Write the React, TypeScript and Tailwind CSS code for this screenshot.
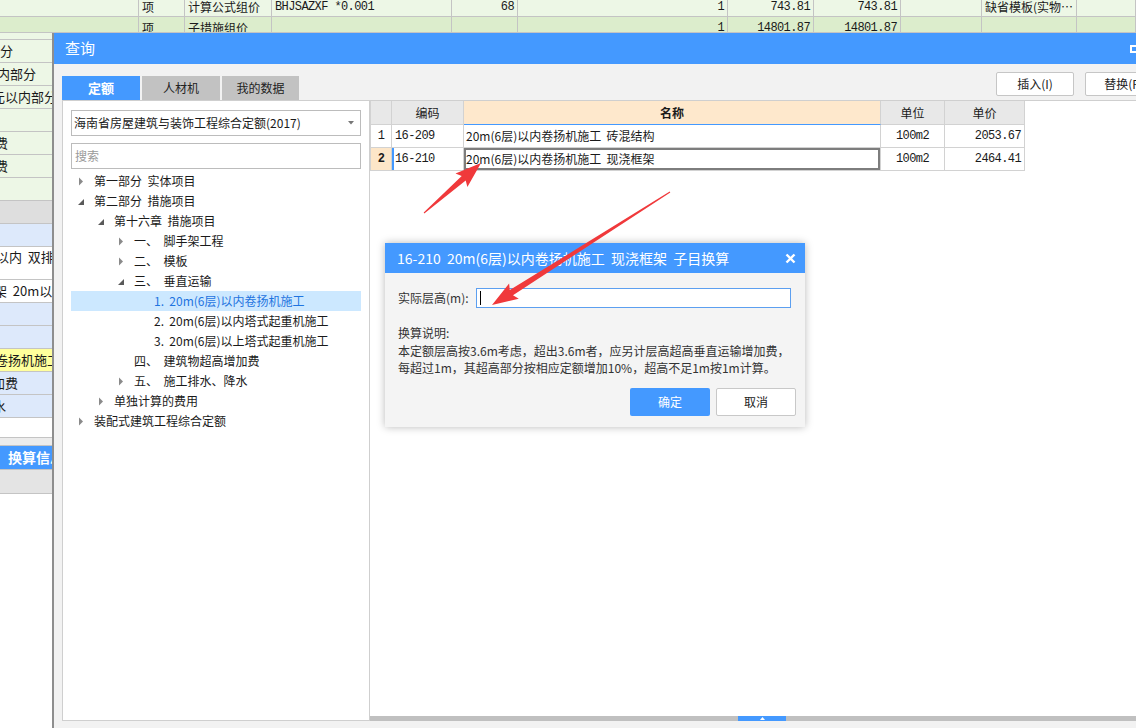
import React from "react";

const CJK = "font-['Noto_Sans_CJK_SC',sans-serif]";
const MONO = "font-['Liberation_Mono','Noto_Sans_CJK_SC',monospace] tracking-[-0.6px]";

type TopCell = { w: string; t?: string; right?: boolean; mono?: boolean };

const TOP_COLS: TopCell[] = [
  { w: "w-[139px]" },
  { w: "w-[46px]", t: "项" },
  { w: "w-[87px]", t: "计算公式组价" },
  { w: "w-[180px]", t: "BHJSAZXF *0.001", mono: true },
  { w: "w-[66px]", t: "68", right: true, mono: true },
  { w: "w-[210px]", t: "1", right: true, mono: true },
  { w: "w-[86px]", t: "743.81", right: true, mono: true },
  { w: "w-[87px]", t: "743.81", right: true, mono: true },
  { w: "w-[81px]" },
  { w: "w-[95px]", t: "缺省模板(实物…" },
  { w: "w-[59px]" },
];

const SECOND_ROW = ["", "项", "子措施组价", "", "", "1", "14801.87", "14801.87", "", "", ""];

type SideRow = { h: string; bg: string; t?: string; ml?: string; top?: boolean; bold?: boolean };

const SIDE_ROWS: SideRow[] = [
  { h: "h-[7px]", bg: "bg-[#edf7e6]" },
  { h: "h-[23px]", bg: "bg-[#edf7e6]", t: "部分", ml: "ml-[-13px]" },
  { h: "h-[23px]", bg: "bg-[#edf7e6]", t: "以内部分", ml: "ml-[-16px]" },
  { h: "h-[23px]", bg: "bg-[#edf7e6]", t: "元以内部分", ml: "ml-[-8px]" },
  { h: "h-[23px]", bg: "bg-[#edf7e6]" },
  { h: "h-[23px]", bg: "bg-[#edf7e6]", t: "费", ml: "ml-[-5px]" },
  { h: "h-[23px]", bg: "bg-[#edf7e6]", t: "费", ml: "ml-[-5px]" },
  { h: "h-[23px]", bg: "bg-[#edf7e6]" },
  { h: "h-[23px]", bg: "bg-[#dedede]" },
  { h: "h-[23px]", bg: "bg-[#dde9fb]" },
  { h: "h-[33px]", bg: "bg-white", t: "以内  双排", ml: "ml-[-4px]", top: true },
  { h: "h-[23px]", bg: "bg-white", t: "架  20m以内", ml: "ml-[-6px]" },
  { h: "h-[23px]", bg: "bg-[#dde9fb]" },
  { h: "h-[23px]", bg: "bg-[#dde9fb]" },
  { h: "h-[23px]", bg: "bg-[#ffff9c]", t: "卷扬机施工", ml: "ml-[-5px]" },
  { h: "h-[23px]", bg: "bg-[#dde9fb]", t: "加费", ml: "ml-[-8px]" },
  { h: "h-[23px]", bg: "bg-[#dde9fb]", t: "水", ml: "ml-[-7px]" },
  { h: "h-[20px]", bg: "bg-white" },
  { h: "h-[8px]", bg: "bg-[#ececec]" },
  { h: "h-[24px]", bg: "bg-[#4499ff]", t: "换算信息", ml: "ml-[8px]", bold: true },
  { h: "h-[24px]", bg: "bg-[#e4e4e4]" },
];

type TreeItem = { lv: number; t: string; a?: "c" | "e"; sel?: boolean };

const TREE: TreeItem[] = [
  { lv: 0, t: "第一部分  实体项目", a: "c" },
  { lv: 0, t: "第二部分  措施项目", a: "e" },
  { lv: 1, t: "第十六章  措施项目", a: "e" },
  { lv: 2, t: "一、  脚手架工程", a: "c" },
  { lv: 2, t: "二、  模板", a: "c" },
  { lv: 2, t: "三、  垂直运输", a: "e" },
  { lv: 3, t: "1.  20m(6层)以内卷扬机施工", sel: true },
  { lv: 3, t: "2.  20m(6层)以内塔式起重机施工" },
  { lv: 3, t: "3.  20m(6层)以上塔式起重机施工" },
  { lv: 2, t: "四、  建筑物超高增加费" },
  { lv: 2, t: "五、  施工排水、降水", a: "c" },
  { lv: 1, t: "单独计算的费用", a: "c" },
  { lv: 0, t: "装配式建筑工程综合定额", a: "c" },
];

const INDENT = ["pl-[7px]", "pl-[27px]", "pl-[47px]", "pl-[67px]"];

const ROWS = [
  { n: "1", code: "16-209", name: "20m(6层)以内卷扬机施工  砖混结构", unit: "100m2", price: "2053.67" },
  { n: "2", code: "16-210", name: "20m(6层)以内卷扬机施工  现浇框架", unit: "100m2", price: "2464.41" },
];

function arrowPoints(x1: number, y1: number, x2: number, y2: number) {
  const headLen = 23;
  const headW = 18;
  const shaftW = 6;
  const tailW = 1;
  const dx = x2 - x1;
  const dy = y2 - y1;
  const len = Math.hypot(dx, dy);
  const ux = dx / len;
  const uy = dy / len;
  const px = -uy;
  const py = ux;
  const bx = x2 - ux * headLen;
  const by = y2 - uy * headLen;
  const wx = bx - ux * 3;
  const wy = by - uy * 3;
  const pts = [
    [x1 + (px * tailW) / 2, y1 + (py * tailW) / 2],
    [bx + (px * shaftW) / 2, by + (py * shaftW) / 2],
    [wx + (px * headW) / 2, wy + (py * headW) / 2],
    [x2, y2],
    [wx - (px * headW) / 2, wy - (py * headW) / 2],
    [bx - (px * shaftW) / 2, by - (py * shaftW) / 2],
    [x1 - (px * tailW) / 2, y1 - (py * tailW) / 2],
  ];
  return pts.map((p) => `${p[0].toFixed(1)},${p[1].toFixed(1)}`).join(" ");
}

function TreeArrow({ kind }: { kind?: "c" | "e" }) {
  if (kind === "c") {
    return (
      <svg width="6" height="9" viewBox="0 0 6 9" className="mr-[10px] shrink-0">
        <polygon points="1,0.5 5,4.5 1,8.5" fill="#8a8a8a" />
      </svg>
    );
  }
  if (kind === "e") {
    return (
      <svg width="6" height="9" viewBox="0 0 6 9" className="mr-[10px] shrink-0">
        <polygon points="6,2 6,8 0,8" fill="#5a5a5a" />
      </svg>
    );
  }
  return <span className="mr-[10px] w-[6px] shrink-0" />;
}

export default function App() {
  return (
    <div className={`relative h-[728px] w-[1136px] overflow-hidden bg-white text-[#1a1a1a] ${CJK}`}>
      {/* page behind the dialog */}
      <div className="flex flex-col">
        <div className="flex h-[17px] bg-[#edf7e6] text-[12px] leading-[12px]">
          {TOP_COLS.map((c, i) => (
            <div
              key={i}
              className={`${c.w} shrink-0 overflow-hidden whitespace-nowrap border-r border-b border-[#c4c4c4] pt-[1px] ${
                c.right ? "pr-[3px] text-right" : "pl-[3px]"
              } ${c.mono ? MONO : ""}`}
            >
              {c.t}
            </div>
          ))}
        </div>
        <div className="flex h-[16px] bg-[#dcedcc] text-[12px] leading-[12px]">
          {TOP_COLS.map((c, i) => (
            <div
              key={i}
              className={`${c.w} shrink-0 overflow-hidden whitespace-nowrap border-r border-b border-[#c4c4c4] pt-[5px] ${
                c.right ? "pr-[3px] text-right" : "pl-[3px]"
              } ${c.mono ? MONO : ""}`}
            >
              {SECOND_ROW[i]}
            </div>
          ))}
        </div>
        {SIDE_ROWS.map((r, i) => (
          <div
            key={i}
            className={`${r.h} ${r.bg} flex w-[52px] overflow-hidden border-b border-[#c4c4c4] ${
              r.top ? "items-start" : "items-center"
            }`}
          >
            {r.t && (
              <span
                className={`${r.ml} shrink-0 whitespace-pre ${
                  r.bold ? "text-[14px] font-bold text-white" : "text-[13px]"
                }`}
              >
                {r.t}
              </span>
            )}
          </div>
        ))}
      </div>

      {/* query dialog */}
      <div className="absolute left-[52px] top-[33px] flex h-[700px] w-[1120px] flex-col border-l-2 border-[#8e8e8e] bg-[#f2f2f2]">
        <div className="flex h-[31px] shrink-0 items-center justify-between bg-[#4499ff] pl-[11px] pr-[10px]">
          <span className="text-[15px] text-white">查询</span>
          <div className="flex items-center gap-[12px]">
            <svg width="10" height="8" viewBox="0 0 10 8">
              <rect x="1" y="1" width="8" height="6" fill="none" stroke="#fff" strokeWidth="2" />
            </svg>
            <svg width="10" height="10" viewBox="0 0 10 10">
              <path d="M1 1 L9 9 M9 1 L1 9" stroke="#fff" strokeWidth="2" />
            </svg>
          </div>
        </div>

        <div className="flex flex-1 flex-col pl-[8px] pr-[9px]">
          <div className="mt-[8px] flex h-[28px] shrink-0 justify-between">
            <div className="flex gap-[2px] self-end">
              <div className="flex h-[24px] w-[78px] items-center justify-center bg-[#4499ff] text-[13px] font-bold text-white">
                定额
              </div>
              <div className="flex h-[24px] w-[78px] items-center justify-center bg-[#c2c2c2] text-[12px] text-[#222]">
                人材机
              </div>
              <div className="flex h-[24px] w-[77px] items-center justify-center bg-[#c2c2c2] text-[12px] text-[#222]">
                我的数据
              </div>
            </div>
            <div className="flex gap-[11px] self-start">
              <button className="flex h-[24px] w-[78px] items-center justify-center rounded-[2px] border border-[#c6c6c6] bg-white text-[12px] text-[#222]">
                插入(I)
              </button>
              <button className="flex h-[24px] w-[78px] items-center justify-center rounded-[2px] border border-[#c6c6c6] bg-white text-[12px] text-[#222]">
                替换(R)
              </button>
            </div>
          </div>

          <div className="flex h-[621px] shrink-0">
            {/* left tree panel */}
            <div className="flex w-[308px] shrink-0 flex-col border border-[#cfcfcf] bg-white px-[8px] pt-[9px]">
              <div className="flex h-[26px] items-center justify-between border border-[#bcbcbc] pl-[2px] pr-[6px] text-[12px]">
                <span>海南省房屋建筑与装饰工程综合定额(2017)</span>
                <svg width="6" height="4" viewBox="0 0 6 4">
                  <polygon points="0,0 6,0 3,3.5" fill="#777" />
                </svg>
              </div>
              <div className="mt-[7px] flex h-[26px] items-center border border-[#bcbcbc] pl-[3px] text-[12px] text-[#9a9a9a]">
                搜索
              </div>
              <div className="mt-[2px] flex flex-col text-[12px]">
                {TREE.map((n, i) => (
                  <div
                    key={i}
                    className={`flex h-[20px] items-center ${INDENT[n.lv]} ${n.sel ? "bg-[#cce8ff] text-[#1f74e0]" : ""}`}
                  >
                    <TreeArrow kind={n.a} />
                    <span className="whitespace-pre">{n.t}</span>
                  </div>
                ))}
              </div>
            </div>

            {/* right table panel */}
            <div className="flex flex-1 flex-col border-t border-[#cfcfcf] bg-white">
              <div className="flex-1">
                <div className="grid w-[655px] grid-cols-[21px_72px_417px_64px_80px] border-l border-[#d2d2d2] text-[12px]">
                  <div className="h-[24px] border-r border-b border-[#d2d2d2] bg-[#e8e8e8]" />
                  <div className="flex h-[24px] items-center justify-center border-r border-b border-[#d2d2d2] bg-[#e8e8e8]">
                    编码
                  </div>
                  <div className="flex h-[24px] items-center justify-center border-r border-b border-[#d2d2d2] border-b-[#4499ff] bg-[#fee8cc] font-bold">
                    名称
                  </div>
                  <div className="flex h-[24px] items-center justify-center border-r border-b border-[#d2d2d2] bg-[#e8e8e8]">
                    单位
                  </div>
                  <div className="flex h-[24px] items-center justify-center border-r border-b border-[#d2d2d2] bg-[#e8e8e8]">
                    单价
                  </div>
                  {ROWS.map((r) => {
                    const sel = r.n === "2";
                    return (
                      <React.Fragment key={r.n}>
                        <div
                          className={`flex h-[23px] items-center justify-center border-r border-b border-[#d2d2d2] ${
                            sel ? "bg-[#fde6c8] font-bold" : ""
                          } ${MONO}`}
                        >
                          {r.n}
                        </div>
                        <div
                          className={`flex h-[23px] items-center border-r border-b border-[#d2d2d2] pl-[3px] ${MONO} ${
                            sel ? "shadow-[inset_2px_0_0_#4499ff]" : ""
                          }`}
                        >
                          {r.code}
                        </div>
                        <div
                          className={`flex h-[23px] items-center whitespace-pre border-r border-b border-[#d2d2d2] pl-[2px] ${
                            sel ? "shadow-[inset_0_0_0_2px_#7d7d7d]" : ""
                          }`}
                        >
                          {r.name}
                        </div>
                        <div className={`flex h-[23px] items-center justify-center border-r border-b border-[#d2d2d2] ${MONO}`}>
                          {r.unit}
                        </div>
                        <div
                          className={`flex h-[23px] items-center justify-end border-r border-b border-[#d2d2d2] pr-[3px] ${MONO}`}
                        >
                          {r.price}
                        </div>
                      </React.Fragment>
                    );
                  })}
                </div>
              </div>
              <div className="flex h-[5px] shrink-0 bg-[#c0c0c0]">
                <div className="ml-[368px] flex h-[5px] w-[48px] items-center justify-center bg-[#4499ff]">
                  <svg width="5" height="3" viewBox="0 0 5 3">
                    <polygon points="2.5,0 5,3 0,3" fill="#fff" />
                  </svg>
                </div>
              </div>
            </div>
          </div>
        </div>
      </div>

      {/* sub-item conversion popup */}
      <div className="absolute left-[385px] top-[243px] flex h-[184px] w-[420px] flex-col bg-[#f4f4f4] shadow-[0_0_8px_rgba(0,0,0,0.28)]">
        <div className="flex h-[30px] shrink-0 items-center justify-between bg-[#4499ff] pl-[12px] pr-[9px]">
          <span className="whitespace-pre text-[14px] text-white">16-210  20m(6层)以内卷扬机施工  现浇框架  子目换算</span>
          <svg width="11" height="11" viewBox="0 0 11 11">
            <path d="M1.5 1.5 L9.5 9.5 M9.5 1.5 L1.5 9.5" stroke="#fff" strokeWidth="2.4" />
          </svg>
        </div>
        <div className="flex flex-1 flex-col pl-[13px] pr-[14px] text-[12px] text-[#333]">
          <div className="mt-[15px] flex h-[20px] items-center">
            <span className="w-[78px]">实际层高(m):</span>
            <div className="flex h-[20px] flex-1 items-center border border-[#5c9ff0] bg-white pl-[3px]">
              <span className="h-[14px] w-[1px] bg-black" />
            </div>
          </div>
          <div className="mt-[16px] leading-[17.5px]">
            <div>换算说明:</div>
            <div>本定额层高按3.6m考虑，超出3.6m者，应另计层高超高垂直运输增加费，</div>
            <div>每超过1m，其超高部分按相应定额增加10%，超高不足1m按1m计算。</div>
          </div>
          <div className="mt-[11px] flex justify-end gap-[6px]">
            <button className="flex h-[28px] w-[80px] items-center justify-center rounded-[2px] bg-[#4499ff] text-[12px] text-white">
              确定
            </button>
            <button className="mr-[-5px] flex h-[28px] w-[80px] items-center justify-center rounded-[2px] border border-[#c8c8c8] bg-white text-[12px] text-[#222]">
              取消
            </button>
          </div>
        </div>
      </div>

      {/* annotation arrows */}
      <svg className="pointer-events-none absolute left-0 top-0" width="1136" height="728">
        <polygon points={arrowPoints(424, 213, 481, 163)} fill="#f0393b" />
        <polygon points={arrowPoints(670, 192, 492, 305)} fill="#f0393b" />
      </svg>
    </div>
  );
}
